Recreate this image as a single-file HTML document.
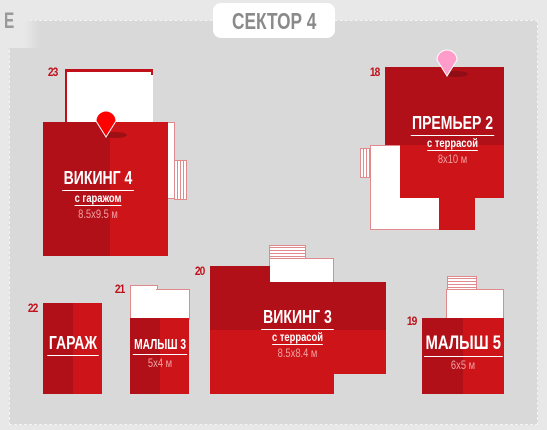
<!DOCTYPE html>
<html><head><meta charset="utf-8"><style>
*{margin:0;padding:0;box-sizing:border-box}
body{width:547px;height:430px;background:#e8e8e8;position:relative;overflow:hidden;font-family:"Liberation Sans",sans-serif}
.a{position:absolute}
.area{left:9px;top:20px;width:529px;height:405px;background:#d9d9d9;border:1px dashed #f4f4f4}
.dk{background:#b11018}.rd{background:#cc1419}.wh{background:#fff;border:1px solid #e08a8e}
.st{background:repeating-linear-gradient(0deg,#fff 0 2px,#e08a8e 2px 3px);border:1px solid #e08a8e}
.stv{background:repeating-linear-gradient(90deg,#fff 0 2px,#e08a8e 2px 3px);border:1px solid #e08a8e}
.num{color:#c0101a;font-weight:bold;font-size:12px;letter-spacing:-1px;transform:scaleX(.85)}
.t{color:#fff;font-weight:bold;text-align:center;transform:scaleX(.78);white-space:nowrap}
.t b{display:inline-block;font-size:18px;border-bottom:1px solid #fff;padding:0 2px 1px}
.t i{display:block;font-style:normal;font-size:12px;font-weight:bold}
.t i u{text-decoration:none;border-bottom:1px solid #fff}
.t s{display:block;text-decoration:none;font-size:12px;color:#f5a0a0;font-weight:normal;margin-top:2px}
</style></head><body>
<div class="a area"></div>
<div class="a" style="left:0;top:8px;width:40px;height:40px;background:linear-gradient(90deg,#e8e8e8 60%,#d9d9d900)"></div>
<div class="a" style="left:4px;top:8px;font-size:22px;font-weight:bold;color:#999;transform:scaleX(.7);transform-origin:left">E</div>
<div class="a" style="left:213px;top:3px;width:122px;height:35px;background:#fff;border-radius:8px;color:#8a8a8a;font-weight:bold;font-size:23px;text-align:center;line-height:36px"><span style="display:inline-block;transform:scaleX(.75)">СЕКТОР 4</span></div>

<div class="a num" style="left:47px;top:65px">23</div>
<div class="a" style="left:65px;top:69px;width:88px;height:55px;background:#fff;border-top:3px solid #c0101a;border-left:2px solid #c0101a"></div>
<div class="a" style="left:151px;top:69px;width:2px;height:6px;background:#c0101a"></div>
<div class="a wh" style="left:152px;top:122px;width:23px;height:77px"></div>
<div class="a stv" style="left:174px;top:160px;width:13px;height:40px"></div>
<div class="a dk" style="left:43px;top:122px;width:67px;height:134px"></div>
<div class="a rd" style="left:110px;top:122px;width:58px;height:134px"></div>
<div class="a t" style="left:43px;top:168px;width:110px"><b>ВИКИНГ 4</b><i><u>с гаражом</u></i><s>8.5x9.5 м</s></div>
<svg class="a" style="left:93px;top:101px" width="40" height="40"><ellipse cx="22" cy="34" rx="12" ry="3" fill="#6d0a10" opacity=".5"/><path d="M13 36 L3 20 A10 10 0 1 1 23 20 Z" fill="#f00" stroke="#fff" stroke-width="1"/></svg>

<div class="a num" style="left:369px;top:65px">18</div>
<div class="a stv" style="left:360px;top:148px;width:12px;height:30px"></div>
<div class="a wh" style="left:370px;top:145px;width:70px;height:85px"></div>
<div class="a dk" style="left:385px;top:67px;width:119px;height:78px"></div>
<div class="a rd" style="left:400px;top:145px;width:104px;height:53px"></div>
<div class="a rd" style="left:439px;top:197px;width:36px;height:33px"></div>
<div class="a t" style="left:395px;top:113px;width:115px"><b>ПРЕМЬЕР 2</b><i><u>с террасой</u></i><s>8x10 м</s></div>
<svg class="a" style="left:434px;top:38px" width="40" height="42"><ellipse cx="22" cy="36" rx="12" ry="3" fill="#6d0a10" opacity=".5"/><path d="M13 38 L3 22 A10 10 0 1 1 23 22 Z" fill="#ff9cc9" stroke="#fff" stroke-width="1"/></svg>

<div class="a num" style="left:27px;top:301px">22</div>
<div class="a dk" style="left:43px;top:303px;width:30px;height:91px"></div>
<div class="a rd" style="left:73px;top:303px;width:29px;height:91px"></div>
<div class="a t" style="left:38px;top:333px;width:70px"><b>ГАРАЖ</b></div>

<div class="a num" style="left:114px;top:282px">21</div>
<div class="a wh" style="left:130px;top:285px;width:28px;height:35px"></div>
<div class="a wh" style="left:156px;top:289px;width:34px;height:31px;border-left:none"></div>
<div class="a dk" style="left:130px;top:318px;width:30px;height:76px"></div>
<div class="a rd" style="left:160px;top:318px;width:29px;height:76px"></div>
<div class="a t" style="left:120px;top:336px;width:80px;transform:scaleX(.68)"><b style="font-size:15px">МАЛЫШ 3</b><s style="margin-top:1px;transform:scaleX(1.15)">5x4 м</s></div>

<div class="a num" style="left:194px;top:264px">20</div>
<div class="a st" style="left:269px;top:245px;width:37px;height:15px"></div>
<div class="a wh" style="left:269px;top:258px;width:65px;height:26px"></div>
<div class="a dk" style="left:210px;top:266px;width:60px;height:64px"></div>
<div class="a dk" style="left:268px;top:282px;width:118px;height:48px"></div>
<div class="a rd" style="left:210px;top:330px;width:176px;height:44px"></div>
<div class="a rd" style="left:210px;top:373px;width:124px;height:21px"></div>
<div class="a t" style="left:240px;top:307px;width:115px"><b>ВИКИНГ 3</b><i><u>с террасой</u></i><s>8.5x8.4 м</s></div>

<div class="a num" style="left:406px;top:314px">19</div>
<div class="a st" style="left:447px;top:276px;width:30px;height:15px"></div>
<div class="a wh" style="left:446px;top:289px;width:58px;height:31px"></div>
<div class="a dk" style="left:422px;top:318px;width:41px;height:76px"></div>
<div class="a rd" style="left:463px;top:318px;width:41px;height:76px"></div>
<div class="a t" style="left:413px;top:333px;width:100px"><b style="font-size:19px">МАЛЫШ 5</b><s style="margin-top:1px">6x5 м</s></div>
</body></html>
